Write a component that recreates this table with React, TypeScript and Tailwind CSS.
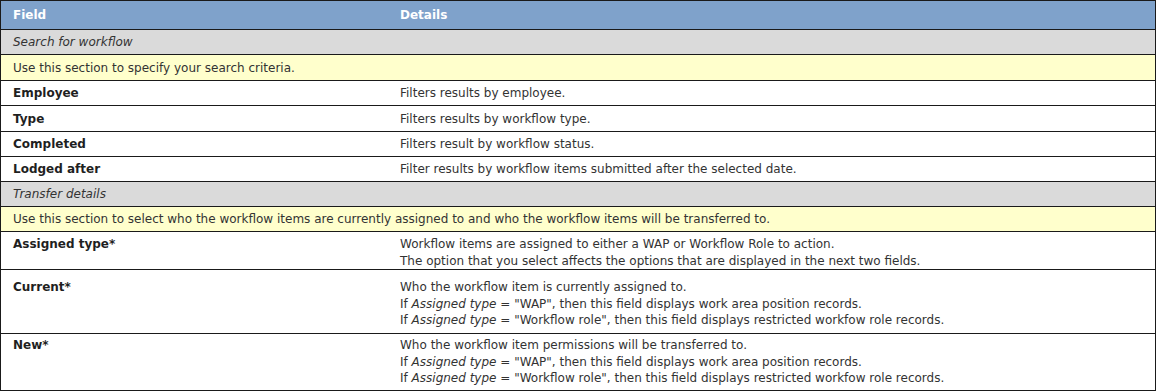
import React from "react";

type Row =
  | { kind: "section"; text: string; h: string }
  | { kind: "note"; text: string; h: string }
  | { kind: "field"; label: string; lines: React.ReactNode[]; h: string; pt?: string };

const A = () => <i>Assigned type</i>;

const rows: Row[] = [
  { kind: "section", text: "Search for workflow", h: "h-[25px]" },
  { kind: "note", text: "Use this section to specify your search criteria.", h: "h-[26px]" },
  { kind: "field", label: "Employee", lines: ["Filters results by employee."], h: "h-[25px]" },
  { kind: "field", label: "Type", lines: ["Filters results by workflow type."], h: "h-[26px]" },
  { kind: "field", label: "Completed", lines: ["Filters result by workflow status."], h: "h-[25px]" },
  { kind: "field", label: "Lodged after", lines: ["Filter results by workflow items submitted after the selected date."], h: "h-[25px]" },
  { kind: "section", text: "Transfer details", h: "h-[25px]" },
  {
    kind: "note",
    text: "Use this section to select who the workflow items are currently assigned to and who the workflow items will be transferred to.",
    h: "h-[25px]",
  },
  {
    kind: "field",
    label: "Assigned type*",
    lines: [
      "Workflow items are assigned to either a WAP or Workflow Role to action.",
      "The option that you select affects the options that are displayed in the next two fields.",
    ],
    h: "h-[38px]",
    pt: "pt-[4px]",
  },
  {
    kind: "field",
    label: "Current*",
    lines: [
      "Who the workflow item is currently assigned to.",
      <>If <A /> = "WAP", then this field displays work area position records.</>,
      <>If <A /> = "Workflow role", then this field displays restricted workfow role records.</>,
    ],
    h: "h-[64px]",
    pt: "pt-[9px]",
  },
  {
    kind: "field",
    label: "New*",
    lines: [
      "Who the workflow item permissions will be transferred to.",
      <>If <A /> = "WAP", then this field displays work area position records.</>,
      <>If <A /> = "Workflow role", then this field displays restricted workfow role records.</>,
    ],
    h: "h-[56px]",
    pt: "pt-[3px]",
  },
];

export default function App() {
  return (
    <div className="w-[1157px] h-[391px] bg-white font-['DejaVu_Sans',Verdana,sans-serif] text-[12px] text-[#333]">
      <div className="w-[1156px] border border-[#1a1a1a] flex flex-col">
        <div className="h-[29px] bg-[#7fa2cb] flex items-center text-white font-bold text-[12px] border-b border-[#1a1a1a]">
          <div className="w-[388px] shrink-0 pl-[12px]">Field</div>
          <div className="pl-[11px]">Details</div>
        </div>
        {rows.map((r, i) => {
          const last = i === rows.length - 1;
          const bb = last ? "" : "border-b border-[#1a1a1a]";
          if (r.kind === "section")
            return (
              <div key={i} className={`${r.h} ${bb} bg-[#dadada] flex items-center pl-[12px] italic`}>
                {r.text}
              </div>
            );
          if (r.kind === "note")
            return (
              <div key={i} className={`${r.h} ${bb} bg-[#ffffcc] flex items-center pl-[12px]`}>
                {r.text}
              </div>
            );
          const multi = r.lines.length > 1;
          return (
            <div key={i} className={`${r.h} ${bb} bg-white flex ${multi ? `items-start ${r.pt}` : "items-center"}`}>
              <div className="w-[388px] shrink-0 pl-[12px] font-bold text-[#1f1f1f] leading-[16px]">{r.label}</div>
              <div className="pl-[11px] flex flex-col leading-[16px]">
                {r.lines.map((l, j) => (
                  <div key={j} className={j === 0 && multi ? "mb-[1px]" : ""}>
                    {l}
                  </div>
                ))}
              </div>
            </div>
          );
        })}
      </div>
    </div>
  );
}
